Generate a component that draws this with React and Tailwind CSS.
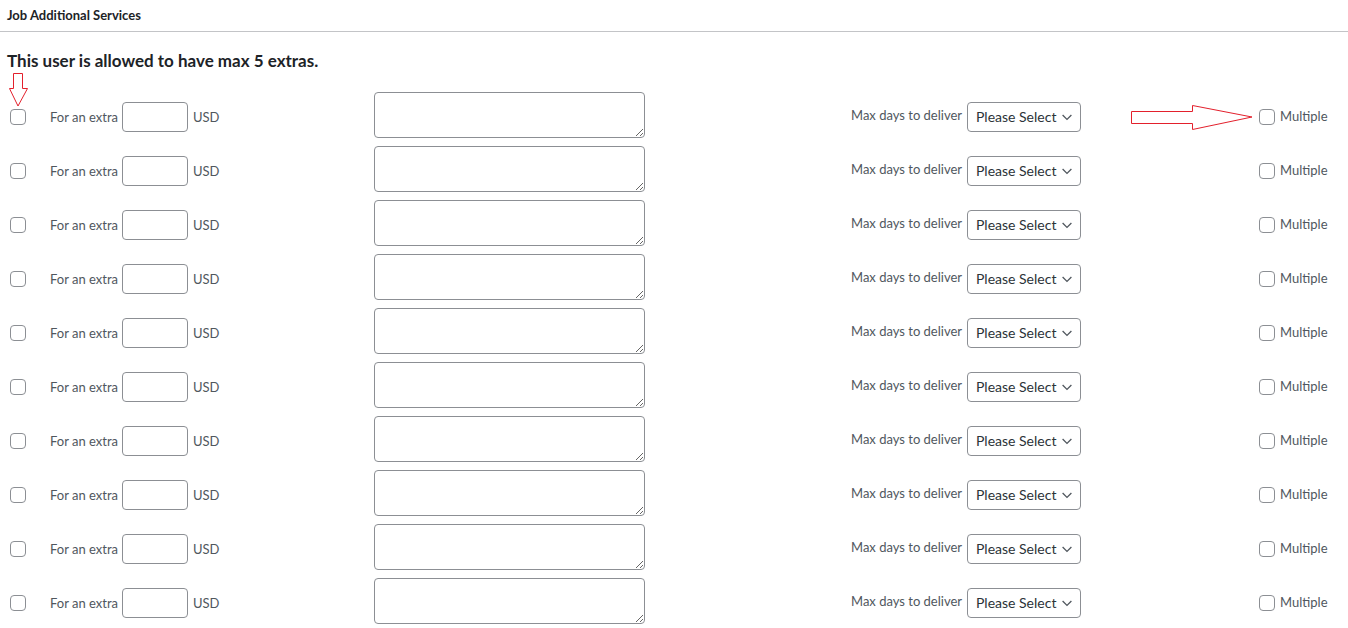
import { useState } from 'react';

const ROWS = Array.from({ length: 10 }, (_, i) => i);

function Chevron() {
  return (
    <svg width="16" height="16" viewBox="0 0 20 20" className="pointer-events-none absolute right-[6px] top-[7px]">
      <path d="M4.5 7.5l5.5 5.5 5.5-5.5" fill="none" stroke="#50575e" strokeWidth="1.6" />
    </svg>
  );
}

function Box() {
  return (
    <input
      type="checkbox"
      className="appearance-none m-0 w-4 h-4 rounded-[4px] border border-[#8c8f94] bg-white shrink-0"
    />
  );
}

function ExtraRow() {
  const [val, setVal] = useState('');
  return (
    <div className="flex items-center h-[54px]">
      <div className="w-[50px] pl-[10px] flex items-center">
        <Box />
      </div>
      <div className="w-[324px] flex items-center text-[13px] text-[#50575e]">
        <span className="w-[68px] pt-[2px] whitespace-nowrap">For an extra</span>
        <input
          value={val}
          onChange={(e) => setVal(e.target.value)}
          className="ml-[4px] w-[66px] h-[30px] rounded-[4px] border border-[#8c8f94] bg-white px-2 text-[14px] outline-none"
        />
        <span className="ml-[5px] pt-[2px]">USD</span>
      </div>
      <textarea className="self-start mt-[2px] w-[271px] h-[46px] rounded-[4px] border border-[#8c8f94] bg-white px-2 py-1 text-[14px] outline-none" />
      <div className="w-[206px]" />
      <span className="w-[112px] whitespace-nowrap text-[13px] text-[#50575e] -mt-[3px]">Max days to deliver</span>
      <div className="relative ml-[4px]">
        <select className="appearance-none w-[114px] h-[30px] rounded-[4px] border border-[#8c8f94] bg-white pl-[8px] pr-5 pb-[2px] text-[14px] text-[#2c3338] outline-none">
          <option>Please Select</option>
          <option>1</option>
          <option>2</option>
          <option>3</option>
        </select>
        <Chevron />
      </div>
      <div className="w-[178px]" />
      <label className="flex items-center gap-[5px] text-[13px] text-[#50575e]">
        <Box />
        <span>Multiple</span>
      </label>
    </div>
  );
}

export default function App() {
  return (
    <div className="relative min-h-screen bg-white text-[#1d2327]" style={{ fontFamily: 'Lato, "Noto Sans", sans-serif' }}>
      <div className="h-[32px] border-b border-[#c3c4c7] px-[7px] flex items-center">
        <h2 className="text-[13px] font-bold text-[#1d2327]">Job Additional Services</h2>
      </div>
      <div className="px-[7px] pt-[17px] pb-[17px]">
        <h3 className="text-[17px] font-bold leading-[24px] text-[#1d2327]">This user is allowed to have max 5 extras.</h3>
      </div>
      <div>
        {ROWS.map((i) => (
          <ExtraRow key={i} />
        ))}
      </div>

      {/* annotation arrows */}
      <svg className="absolute left-0 top-0 pointer-events-none" width="40" height="110">
        <path d="M13.5 73.5 H22.5 V88.5 H27.5 L18 106 L9.5 88.5 H13.5 Z" fill="none" stroke="#e3202c" strokeWidth="1" />
      </svg>
      <svg className="absolute left-[1125px] top-[98px] pointer-events-none" width="140" height="40">
        <path d="M6.5 13.5 H67.5 V7.5 L127 19 L67.5 31.5 V25.5 H6.5 Z" fill="none" stroke="#e3202c" strokeWidth="1" />
      </svg>
    </div>
  );
}
